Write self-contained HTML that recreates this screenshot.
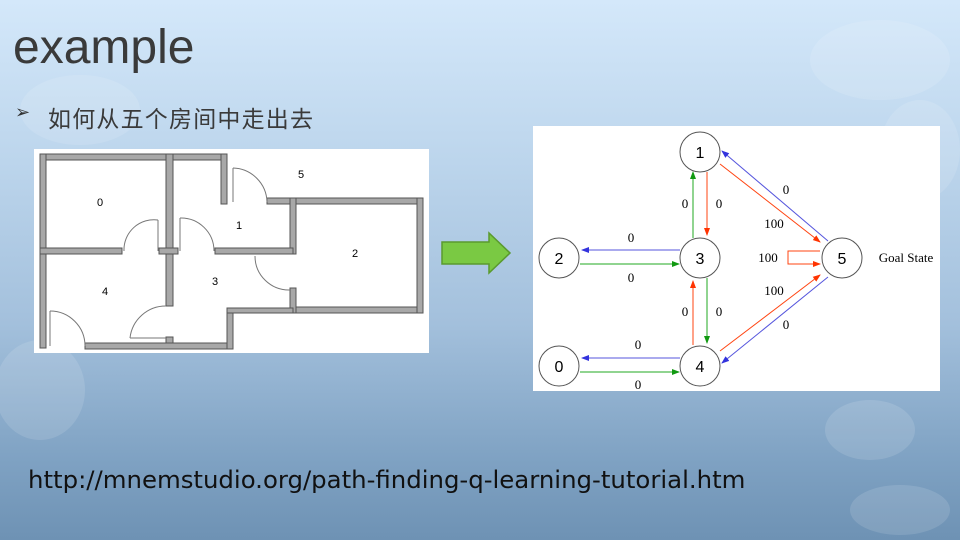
<!DOCTYPE html>
<html><head><meta charset="utf-8"><style>
body{margin:0;width:960px;height:540px;overflow:hidden;position:relative;font-family:"Liberation Sans","Noto Sans CJK SC",sans-serif;
background:linear-gradient(180deg,#d4e8fa 0%,#bcd5ec 30%,#a3c0dc 60%,#7fa2c3 85%,#6e92b4 100%);}
.t{position:absolute;white-space:nowrap}
</style></head><body>
<svg class="t" style="left:0;top:0" width="960" height="540">
<g fill="#ffffff" opacity="0.12">
<ellipse cx="80" cy="110" rx="60" ry="35"/>
<ellipse cx="880" cy="60" rx="70" ry="40"/>
<ellipse cx="920" cy="150" rx="40" ry="50"/>
<ellipse cx="870" cy="430" rx="45" ry="30"/>
<ellipse cx="40" cy="390" rx="45" ry="50"/>
<ellipse cx="900" cy="510" rx="50" ry="25"/>
</g>
</svg>
<div class="t" style="left:13px;top:20px;font-size:48px;color:#3a3a3a;line-height:56px">example</div>
<div class="t" style="left:15px;top:102px;font-size:18px;color:#333">➢</div>
<div class="t" style="left:48px;top:100px;font-size:23px;color:#3a3a3a;letter-spacing:1.2px">如何从五个房间中走出去</div>

<svg class="t" style="left:34px;top:149px" width="395" height="204" viewBox="34 149 395 204">
<rect x="34" y="149" width="395" height="204" fill="#fff"/>
<g fill="#a8a8a8" stroke="#555" stroke-width="1">
<rect x="40" y="154" width="187" height="6"/>
<rect x="40" y="154" width="6" height="194"/>
<rect x="166" y="154" width="7" height="152"/>
<rect x="166" y="337" width="7" height="12"/>
<rect x="221" y="154" width="6" height="50"/>
<rect x="267" y="198" width="26" height="6"/>
<rect x="290" y="198" width="133" height="6"/>
<rect x="290" y="307" width="133" height="6"/>
<rect x="417" y="198" width="6" height="115"/>
<rect x="290" y="198" width="6" height="56"/>
<rect x="290" y="288" width="6" height="25"/>
<rect x="40" y="248" width="82" height="6"/>
<rect x="159" y="248" width="19" height="6"/>
<rect x="215" y="248" width="78" height="6"/>
<rect x="85" y="343" width="145" height="6"/>
<rect x="227" y="308" width="6" height="41"/>
<rect x="227" y="308" width="66" height="5"/>
</g>
<g fill="none" stroke="#777" stroke-width="1">
<path d="M233 168 A35 35 0 0 1 267 202"/><line x1="233" y1="168" x2="233" y2="202"/>
<path d="M158 220 A30 30 0 0 0 124 251"/><line x1="158" y1="220" x2="158" y2="251"/>
<path d="M180 218 A33 33 0 0 1 214 251"/><line x1="180" y1="218" x2="180" y2="251"/>
<path d="M255 256 A34 34 0 0 0 290 290"/>
<path d="M166 306 A36 36 0 0 0 130 338"/><line x1="130" y1="338" x2="166" y2="338"/>
<path d="M50 311 A35 35 0 0 1 85 346"/><line x1="50" y1="311" x2="50" y2="346"/>
</g>
<g font-size="11" fill="#000" font-family="Liberation Sans,sans-serif">
<text x="97" y="206">0</text><text x="236" y="229">1</text><text x="352" y="257">2</text>
<text x="212" y="285">3</text><text x="102" y="295">4</text><text x="298" y="178">5</text>
</g>
</svg>

<svg class="t" style="left:440px;top:231px" width="72" height="44">
<polygon points="2,11 49,11 49,2 70,22 49,42 49,33 2,33" fill="#7ac943" stroke="#5a9a2e" stroke-width="1.5"/>
</svg>

<svg class="t" style="left:533px;top:126px" width="407" height="265" viewBox="533 126 407 265">
<defs>
<marker id="b" markerWidth="8" markerHeight="8" refX="7" refY="4" orient="auto" markerUnits="userSpaceOnUse"><path d="M0,1 L8,4 L0,7z" fill="#3333dd"/></marker>
<marker id="g" markerWidth="8" markerHeight="8" refX="7" refY="4" orient="auto" markerUnits="userSpaceOnUse"><path d="M0,1 L8,4 L0,7z" fill="#119911"/></marker>
<marker id="r" markerWidth="8" markerHeight="8" refX="7" refY="4" orient="auto" markerUnits="userSpaceOnUse"><path d="M0,1 L8,4 L0,7z" fill="#ff3300"/></marker>
</defs>
<rect x="533" y="126" width="407" height="265" fill="#fff"/>
<g stroke-width="1" fill="none">
<line x1="680" y1="250" x2="582" y2="250" stroke="#5555dd" marker-end="url(#b)"/>
<line x1="580" y1="264" x2="679" y2="264" stroke="#22aa22" marker-end="url(#g)"/>
<line x1="680" y1="358" x2="582" y2="358" stroke="#5555dd" marker-end="url(#b)"/>
<line x1="580" y1="372" x2="679" y2="372" stroke="#22aa22" marker-end="url(#g)"/>
<line x1="693" y1="238" x2="693" y2="172" stroke="#22aa22" marker-end="url(#g)"/>
<line x1="707" y1="172" x2="707" y2="235" stroke="#ff4411" marker-end="url(#r)"/>
<line x1="707" y1="278" x2="707" y2="343" stroke="#22aa22" marker-end="url(#g)"/>
<line x1="693" y1="345" x2="693" y2="281" stroke="#ff4411" marker-end="url(#r)"/>
<line x1="828" y1="241" x2="722" y2="151" stroke="#5555dd" marker-end="url(#b)"/>
<line x1="720" y1="164" x2="820" y2="242" stroke="#ff4411" marker-end="url(#r)"/>
<line x1="720" y1="351" x2="820" y2="275" stroke="#ff4411" marker-end="url(#r)"/>
<line x1="828" y1="277" x2="722" y2="363" stroke="#5555dd" marker-end="url(#b)"/>
<polyline points="820,251 788,251 788,264 820,264" stroke="#ff4411" marker-end="url(#r)"/>
</g>
<g fill="#fff" stroke="#555" stroke-width="1">
<circle cx="700" cy="152" r="20"/><circle cx="559" cy="258" r="20"/><circle cx="700" cy="258" r="20"/>
<circle cx="842" cy="258" r="20"/><circle cx="559" cy="366" r="20"/><circle cx="700" cy="366" r="20"/>
</g>
<g font-size="16" text-anchor="middle" fill="#000">
<text x="700" y="158">1</text><text x="559" y="264">2</text><text x="700" y="264">3</text>
<text x="842" y="264">5</text><text x="559" y="372">0</text><text x="700" y="372">4</text>
</g>
<g font-family="Liberation Serif,serif" font-size="13" fill="#000" text-anchor="middle">
<text x="631" y="242">0</text><text x="631" y="282">0</text>
<text x="638" y="349">0</text><text x="638" y="389">0</text>
<text x="685" y="208">0</text><text x="719" y="208">0</text>
<text x="685" y="316">0</text><text x="719" y="316">0</text>
<text x="786" y="194">0</text><text x="774" y="228">100</text>
<text x="768" y="262">100</text><text x="774" y="295">100</text>
<text x="786" y="329">0</text>
<text x="906" y="262">Goal State</text>
</g>
</svg>

<div class="t" style="left:28px;top:465px;font-size:24.4px;color:#111;font-family:'DejaVu Sans',sans-serif">http://mnemstudio.org/path-finding-q-learning-tutorial.htm</div>
</body></html>
